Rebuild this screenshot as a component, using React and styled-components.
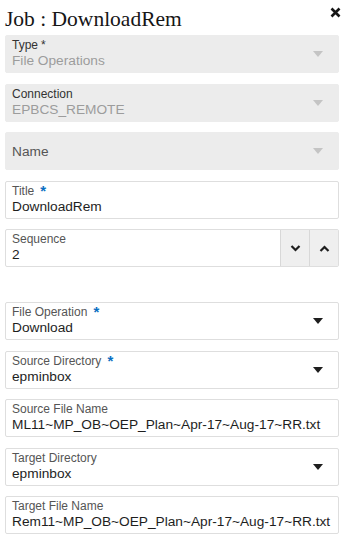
import React from 'react'
import styled, { createGlobalStyle } from 'styled-components'

const GlobalStyle = createGlobalStyle`
  html, body {
    margin: 0;
    padding: 0;
    background: #fff;
  }
  body {
    font-family: "Liberation Sans", Arial, sans-serif;
  }
`

const Panel = styled.div`
  width: 352px;
  padding: 0 13px 0 5px;
  box-sizing: border-box;
`

const Header = styled.div`
  display: flex;
  justify-content: space-between;
  align-items: flex-start;
  height: 35px;
`

const Heading = styled.h1`
  margin: 6px 0 0;
  font-family: "Liberation Serif", "Times New Roman", serif;
  font-size: 21.5px;
  font-weight: 400;
  color: #161616;
  line-height: 26px;
`

const Close = styled.button`
  border: 0;
  background: none;
  padding: 0;
  margin: 7px -2px 0 0;
  width: 11px;
  height: 11px;
  display: flex;
  cursor: pointer;
`

const Form = styled.div`
  display: flex;
  flex-direction: column;
  gap: 10.5px;
`

const Spacer = styled.div`
  height: 14px;
`

const Field = styled.div`
  display: flex;
  align-items: stretch;
  height: 38px;
  box-sizing: border-box;
  border: 1px solid ${({ $disabled }) => ($disabled ? '#ececec' : '#dedede')};
  background: ${({ $disabled }) => ($disabled ? '#ececec' : '#fff')};
  border-radius: 2px;
`

const Body = styled.div`
  flex: 1;
  min-width: 0;
  padding: 2px 0 0 6px;
  display: flex;
  flex-direction: column;
  justify-content: ${({ $center }) => ($center ? 'center' : 'flex-start')};
`

const Label = styled.div`
  font-size: 12px;
  line-height: 14px;
  color: ${({ $disabled }) => ($disabled ? '#333' : '#555')};
  white-space: nowrap;
`

const Star = styled.span`
  color: ${({ $blue }) => ($blue ? '#0a6fc2' : 'inherit')};
  margin-left: ${({ $blue }) => ($blue ? '6px' : '3px')};
  font-size: ${({ $blue }) => ($blue ? '15px' : '12px')};
  font-weight: ${({ $blue }) => ($blue ? 700 : 400)};
  position: relative;
  top: ${({ $blue }) => ($blue ? '1px' : '0')};
  line-height: 0;
`

const Value = styled.div`
  font-size: 13.7px;
  line-height: 18px;
  color: ${({ $disabled }) => ($disabled ? '#9c9c9c' : '#1e1e1e')};
  white-space: nowrap;
  overflow: hidden;
`

const CaretBox = styled.div`
  width: 40px;
  display: flex;
  align-items: center;
  justify-content: center;
  padding-left: 4px;
`

const StepButton = styled.button`
  width: 29px;
  border: 0;
  border-left: 1px solid #d8d8d8;
  background: #efefef;
  padding: 0;
  display: flex;
  align-items: center;
  justify-content: center;
`

const Caret = ({ disabled }) => (
  <svg width="10" height="6" viewBox="0 0 10 6">
    <path d="M0 0 L10 0 L5 6 Z" fill={disabled ? '#c4c4c4' : '#1e1e1e'} />
  </svg>
)

const Chevron = ({ up }) => (
  <svg width="11" height="7" viewBox="0 0 11 7">
    <path
      d={up ? 'M1.5 6 L5.5 2 L9.5 6' : 'M1.5 1 L5.5 5 L9.5 1'}
      fill="none"
      stroke="#1e1e1e"
      strokeWidth="2.2"
    />
  </svg>
)

const LabelText = ({ label, required, disabled }) => (
  <Label $disabled={disabled}>
    {label}
    {required === 'plain' && <Star>*</Star>}
    {required === 'blue' && <Star $blue>*</Star>}
  </Label>
)

const SelectField = ({ label, value, required, disabled }) => (
  <Field $disabled={disabled}>
    <Body $center={!value}>
      {value ? (
        <>
          <LabelText label={label} required={required} disabled={disabled} />
          <Value $disabled={disabled}>{value}</Value>
        </>
      ) : (
        <Value style={{ color: '#555' }}>{label}</Value>
      )}
    </Body>
    <CaretBox>
      <Caret disabled={disabled} />
    </CaretBox>
  </Field>
)

const TextField = ({ label, value, required }) => (
  <Field>
    <Body>
      <LabelText label={label} required={required} />
      <Value>{value}</Value>
    </Body>
  </Field>
)

const NumberField = ({ label, value }) => (
  <Field>
    <Body>
      <LabelText label={label} />
      <Value>{value}</Value>
    </Body>
    <StepButton aria-label="decrement">
      <Chevron />
    </StepButton>
    <StepButton aria-label="increment">
      <Chevron up />
    </StepButton>
  </Field>
)

export default function App() {
  return (
    <>
      <GlobalStyle />
      <Panel>
        <Header>
          <Heading>Job : DownloadRem</Heading>
          <Close aria-label="close">
            <svg width="11" height="11" viewBox="0 0 11 11">
              <path d="M1.5 1.5 L9.5 9.5 M9.5 1.5 L1.5 9.5" stroke="#161616" strokeWidth="2.6" />
            </svg>
          </Close>
        </Header>
        <Form>
          <SelectField label="Type" value="File Operations" required="plain" disabled />
          <SelectField label="Connection" value="EPBCS_REMOTE" disabled />
          <SelectField label="Name" disabled />
          <TextField label="Title" value="DownloadRem" required="blue" />
          <NumberField label="Sequence" value="2" />
          <Spacer />
          <SelectField label="File Operation" value="Download" required="blue" />
          <SelectField label="Source Directory" value="epminbox" required="blue" />
          <TextField label="Source File Name" value="ML11~MP_OB~OEP_Plan~Apr-17~Aug-17~RR.txt" />
          <SelectField label="Target Directory" value="epminbox" />
          <TextField label="Target File Name" value="Rem11~MP_OB~OEP_Plan~Apr-17~Aug-17~RR.txt" />
        </Form>
      </Panel>
    </>
  )
}
